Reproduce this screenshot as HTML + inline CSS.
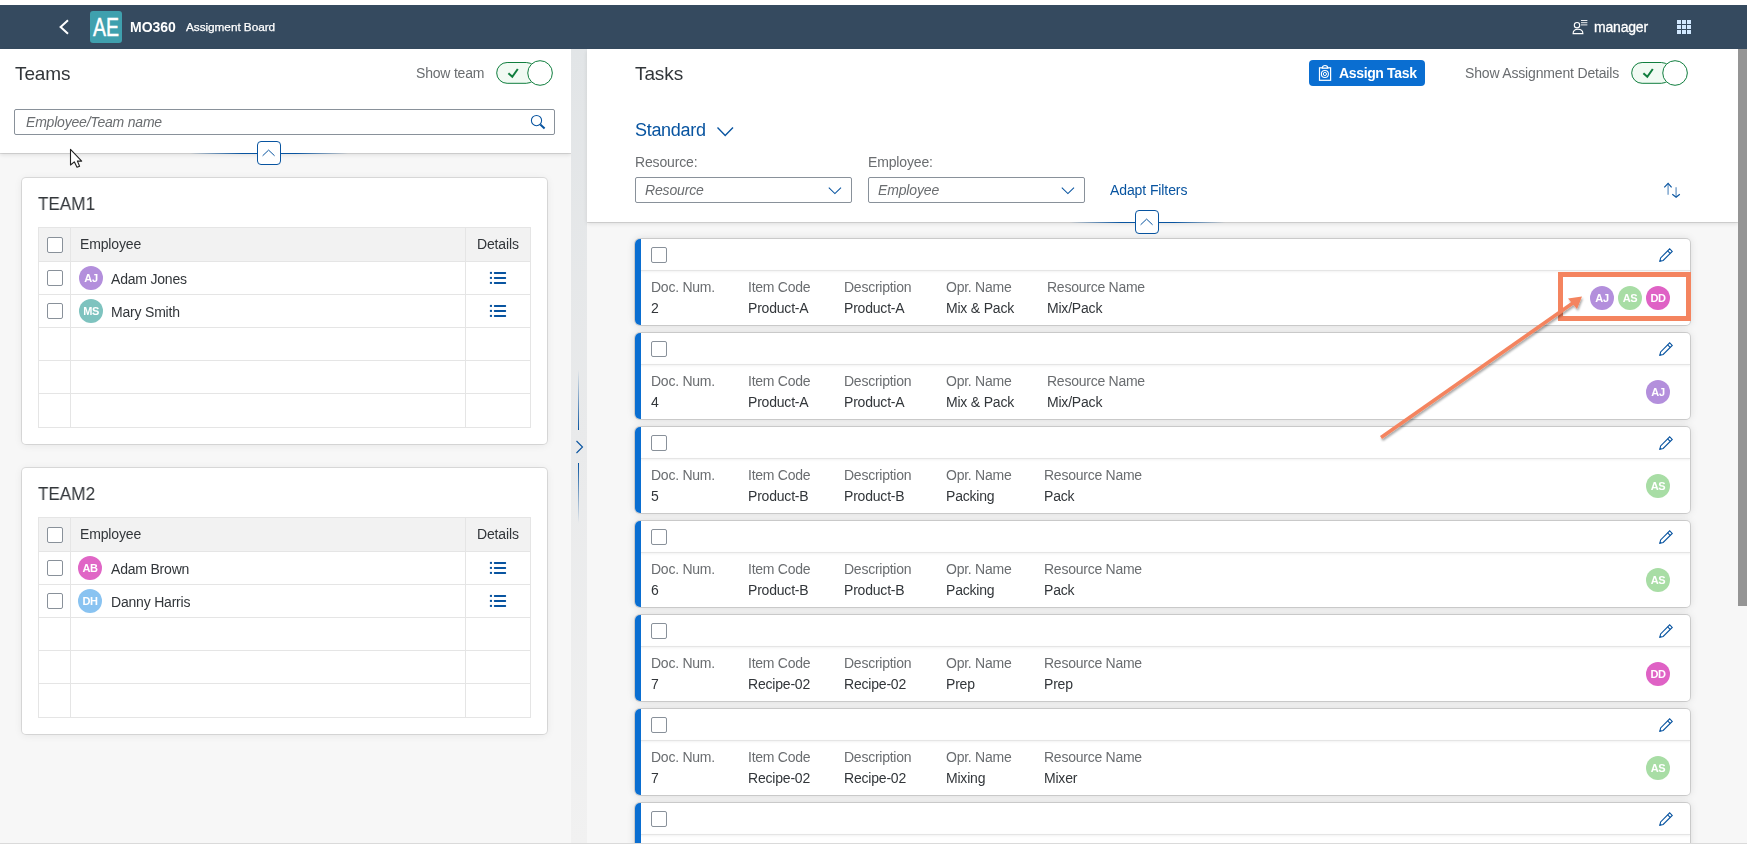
<!DOCTYPE html><html><head><meta charset="utf-8"><style>*{box-sizing:border-box;margin:0;padding:0}
html,body{width:1747px;height:847px;overflow:hidden;background:#fff;font-family:"Liberation Sans",sans-serif;color:#32363a}
.a{position:absolute}
svg{position:absolute;overflow:visible}
.t{position:absolute;white-space:nowrap;will-change:transform;font-size:14px;line-height:14px;letter-spacing:-0.15px}
#hdr{left:0;top:5px;width:1747px;height:44px;background:#354a5f}
#lp{left:0;top:49px;width:571px;height:794px;background:#f7f7f7}
#lph{left:0;top:49px;width:571px;height:104px;background:#fff;box-shadow:0 1px 0 rgba(0,0,0,0.1),0 2px 4px rgba(0,0,0,0.1)}
#split{left:571px;top:49px;width:16px;height:794px;background:linear-gradient(#e2e5e7,#e9eaeb 50%,#f1f1f1)}
#rp{left:587px;top:49px;width:1151px;height:794px;background:#f7f7f7}
#rph{left:587px;top:49px;width:1151px;height:173px;background:#fff;box-shadow:0 1px 0 rgba(0,0,0,0.1),0 2px 4px rgba(0,0,0,0.1)}
#sb{left:1738px;top:49px;width:9px;height:794px;background:#f7f7f7}
#sbt{left:1738px;top:49px;width:9px;height:557px;background:#959595}
#bot{left:0;top:843px;width:1747px;height:1px;background:#dadada}
.cb{position:absolute;width:16px;height:16px;border:1px solid #89919a;border-radius:2px;background:#fff}
.card{position:absolute;background:#fff;border-radius:4px;box-shadow:0 0 0 1px rgba(0,0,0,0.1),0 1px 8px rgba(0,0,0,0.08)}
.tbl{position:absolute;border:1px solid #e5e5e5;background:#fff}
.av{position:absolute;will-change:transform;width:24px;height:24px;border-radius:50%;color:#fff;font-weight:bold;font-size:11px;line-height:25px;text-align:center;letter-spacing:-0.4px}
.tc{position:absolute;left:635px;width:1055px;height:86px;background:#fff;border-radius:5px 4px 4px 5px;box-shadow:0 0 0 1px rgba(0,0,0,0.13),0 0 8px rgba(0,0,0,0.13);overflow:hidden}
.tc .bl{position:absolute;left:0;top:0;width:6px;height:100%;background:#0a6ed1}
.tc .sep{position:absolute;left:6px;right:0;top:31px;height:1px;background:#e5e5e5;box-shadow:0 1px 2px rgba(0,0,0,0.08)}
</style></head><body>
<div class="a" id="hdr"></div>
<div class="a" id="lp"></div>
<div class="a" id="lph"></div>
<div class="a" id="split"></div>
<div class="a" id="rp"></div>
<div class="a" id="rph"></div>
<div class="a" id="sb"></div><div class="a" id="sbt"></div>
<svg style="left:0;top:0" width="1747" height="50"><polyline points="68,20.3 60.6,27 68,33.7" fill="none" stroke="#fff" stroke-width="2"/><rect x="90" y="11" width="32" height="32" rx="3" fill="#3fa0ae"/><text x="106" y="36" font-family="Liberation Sans" font-size="25" fill="#fff" stroke="#fff" stroke-width="0.45" text-anchor="middle" textLength="26" lengthAdjust="spacingAndGlyphs">AE</text></svg>
<div class="t" style="left:129.6px;top:20.17px;font-size:14px;line-height:14px;color:#fff;letter-spacing:0px;font-weight:bold;">MO360</div>
<div class="t" style="left:185.5px;top:21.50px;font-size:11.8px;line-height:11.8px;color:#fff;letter-spacing:-0.05px;-webkit-text-stroke:0.25px #fff;">Assigment Board</div>
<svg style="left:1570px;top:18px" width="20" height="18" viewBox="0 0 20 18"><circle cx="7" cy="7.2" r="2.7" fill="none" stroke="#fff" stroke-width="1.1"/><path d="M3.1,15.6 C3.1,9.8 12.9,9.8 12.9,15.6 Z" fill="none" stroke="#fff" stroke-width="1.1"/><path d="M11,2.5 H17.4 M11,4.7 H17.4 M11,6.9 H17.4" stroke="#fff" stroke-width="0.9"/></svg>
<div class="t" style="left:1594.3px;top:20.37px;font-size:14px;line-height:14px;color:#fff;letter-spacing:-0.2px;-webkit-text-stroke:0.3px #fff;">manager</div>
<svg style="left:1676px;top:19px" width="16" height="16"><rect x="1" y="1" width="4" height="4" fill="#d1e8ff"/><rect x="1" y="6" width="4" height="4" fill="#d1e8ff"/><rect x="1" y="11" width="4" height="4" fill="#d1e8ff"/><rect x="6" y="1" width="4" height="4" fill="#d1e8ff"/><rect x="6" y="6" width="4" height="4" fill="#d1e8ff"/><rect x="6" y="11" width="4" height="4" fill="#d1e8ff"/><rect x="11" y="1" width="4" height="4" fill="#d1e8ff"/><rect x="11" y="6" width="4" height="4" fill="#d1e8ff"/><rect x="11" y="11" width="4" height="4" fill="#d1e8ff"/></svg>
<div class="t" style="left:15px;top:63.92px;font-size:19px;line-height:19px;color:#32363a;letter-spacing:-0.1px;">Teams</div>
<div class="t" style="left:416.4px;top:66.47px;font-size:14px;line-height:14px;color:#6a6d70;letter-spacing:-0.2px;">Show team</div>
<svg style="left:490px;top:55px" width="66" height="34"><rect x="6.7" y="7.5" width="40" height="20.8" rx="10.4" fill="#f1faf3" stroke="#107e3e" stroke-width="1"/><polyline points="18.4,18.2 22.3,21.8 27.8,14" fill="none" stroke="#107e3e" stroke-width="2"/><circle cx="50.05" cy="18" r="12.3" fill="#fff" stroke="#107e3e" stroke-width="1"/></svg>
<div class="a" style="left:14px;top:109px;width:541px;height:26px;border:1px solid #89919a;border-radius:2px;background:#fff"></div>
<div class="t" style="left:26.2px;top:115.27px;font-size:14px;line-height:14px;color:#6a6d70;letter-spacing:-0.2px;font-style:italic;">Employee/Team name</div>
<svg style="left:529px;top:113px" width="18" height="18" viewBox="0 0 18 18"><circle cx="7.5" cy="7.6" r="5.1" fill="none" stroke="#0854a0" stroke-width="1.05"/><line x1="11.3" y1="11.6" x2="15.6" y2="15.6" stroke="#0854a0" stroke-width="2"/></svg>
<svg style="left:190px;top:139px" width="158" height="28"><defs><linearGradient id="g269" x1="0" x2="1"><stop offset="0" stop-color="#0854a0" stop-opacity="0"/><stop offset="0.33" stop-color="#0854a0" stop-opacity="1"/><stop offset="0.67" stop-color="#0854a0" stop-opacity="1"/><stop offset="1" stop-color="#0854a0" stop-opacity="0"/></linearGradient></defs><rect x="0" y="14" width="158" height="1" fill="url(#g269)"/><rect x="67.5" y="2.5" width="23" height="23" rx="3.5" fill="#fff" stroke="#0854a0" stroke-width="1"/><polyline points="72.6,16.8 78.6,11.1 84.6,16.8" fill="none" stroke="#0854a0" stroke-width="1"/></svg>
<svg style="left:69px;top:148px" width="16" height="22" viewBox="0 0 16 22"><path d="M1.5,1.3 L1.5,17 L5.3,13.8 L8,19.3 L10.6,18.2 L8.4,13.1 L12.7,13.1 Z" fill="#fff" stroke="#222" stroke-width="1.1" stroke-linejoin="round"/></svg>
<div class="card" style="left:22px;top:178px;width:525px;height:266px"></div>
<div class="t" style="left:38.0px;top:195.00px;font-size:18.3px;line-height:18.3px;color:#32363a;letter-spacing:0.1px;transform:scaleX(0.93);transform-origin:0 0;">TEAM1</div>
<div class="a" style="left:38px;top:227px;width:493px;height:201px;background:#fff;border:1px solid #e5e5e5"></div>
<div class="a" style="left:39px;top:228px;width:491px;height:33px;background:#f2f2f2"></div>
<div class="a" style="left:39px;top:261px;width:491px;height:1px;background:#e5e5e5"></div>
<div class="a" style="left:39px;top:294px;width:491px;height:1px;background:#e5e5e5"></div>
<div class="a" style="left:39px;top:327px;width:491px;height:1px;background:#e5e5e5"></div>
<div class="a" style="left:39px;top:360px;width:491px;height:1px;background:#e5e5e5"></div>
<div class="a" style="left:39px;top:393px;width:491px;height:1px;background:#e5e5e5"></div>
<div class="a" style="left:70px;top:228px;width:1px;height:199px;background:#e5e5e5"></div>
<div class="a" style="left:465px;top:228px;width:1px;height:199px;background:#e5e5e5"></div>
<div class="cb" style="left:47px;top:237px"></div>
<div class="t" style="left:80.3px;top:237.37px;font-size:14px;line-height:14px;color:#32363a;letter-spacing:-0.15px;">Employee</div>
<div class="t" style="left:476.9px;top:237.37px;font-size:14px;line-height:14px;color:#32363a;letter-spacing:-0.15px;">Details</div>
<div class="cb" style="left:47px;top:270px"></div>
<div class="av" style="left:78.9px;top:266px;background:#b38fdc">AJ</div>
<div class="t" style="left:111px;top:272.37px;font-size:14px;line-height:14px;color:#32363a;letter-spacing:-0.2px;">Adam Jones</div>
<svg style="left:489px;top:271px" width="18" height="13" viewBox="0 0 18 13"><rect x="0.9" y="0.9" width="2.1" height="2" fill="#0854a0"/><rect x="4.9" y="0.9" width="12.2" height="2" rx="0.6" fill="#0854a0"/><rect x="0.9" y="5.9" width="2.1" height="2" fill="#0854a0"/><rect x="4.9" y="5.9" width="12.2" height="2" rx="0.6" fill="#0854a0"/><rect x="0.9" y="10.9" width="2.1" height="2" fill="#0854a0"/><rect x="4.9" y="10.9" width="12.2" height="2" rx="0.6" fill="#0854a0"/></svg>
<div class="cb" style="left:47px;top:303px"></div>
<div class="av" style="left:78.9px;top:299px;background:#7ec3bf">MS</div>
<div class="t" style="left:111px;top:305.37px;font-size:14px;line-height:14px;color:#32363a;letter-spacing:-0.2px;">Mary Smith</div>
<svg style="left:489px;top:304px" width="18" height="13" viewBox="0 0 18 13"><rect x="0.9" y="0.9" width="2.1" height="2" fill="#0854a0"/><rect x="4.9" y="0.9" width="12.2" height="2" rx="0.6" fill="#0854a0"/><rect x="0.9" y="5.9" width="2.1" height="2" fill="#0854a0"/><rect x="4.9" y="5.9" width="12.2" height="2" rx="0.6" fill="#0854a0"/><rect x="0.9" y="10.9" width="2.1" height="2" fill="#0854a0"/><rect x="4.9" y="10.9" width="12.2" height="2" rx="0.6" fill="#0854a0"/></svg>
<div class="card" style="left:22px;top:468px;width:525px;height:266px"></div>
<div class="t" style="left:38.0px;top:485.00px;font-size:18.3px;line-height:18.3px;color:#32363a;letter-spacing:0.1px;transform:scaleX(0.93);transform-origin:0 0;">TEAM2</div>
<div class="a" style="left:38px;top:517px;width:493px;height:201px;background:#fff;border:1px solid #e5e5e5"></div>
<div class="a" style="left:39px;top:518px;width:491px;height:33px;background:#f2f2f2"></div>
<div class="a" style="left:39px;top:551px;width:491px;height:1px;background:#e5e5e5"></div>
<div class="a" style="left:39px;top:584px;width:491px;height:1px;background:#e5e5e5"></div>
<div class="a" style="left:39px;top:617px;width:491px;height:1px;background:#e5e5e5"></div>
<div class="a" style="left:39px;top:650px;width:491px;height:1px;background:#e5e5e5"></div>
<div class="a" style="left:39px;top:683px;width:491px;height:1px;background:#e5e5e5"></div>
<div class="a" style="left:70px;top:518px;width:1px;height:199px;background:#e5e5e5"></div>
<div class="a" style="left:465px;top:518px;width:1px;height:199px;background:#e5e5e5"></div>
<div class="cb" style="left:47px;top:527px"></div>
<div class="t" style="left:80.3px;top:527.37px;font-size:14px;line-height:14px;color:#32363a;letter-spacing:-0.15px;">Employee</div>
<div class="t" style="left:476.9px;top:527.37px;font-size:14px;line-height:14px;color:#32363a;letter-spacing:-0.15px;">Details</div>
<div class="cb" style="left:47px;top:560px"></div>
<div class="av" style="left:78.3px;top:556px;background:#e066c6">AB</div>
<div class="t" style="left:111px;top:562.37px;font-size:14px;line-height:14px;color:#32363a;letter-spacing:-0.2px;">Adam Brown</div>
<svg style="left:489px;top:561px" width="18" height="13" viewBox="0 0 18 13"><rect x="0.9" y="0.9" width="2.1" height="2" fill="#0854a0"/><rect x="4.9" y="0.9" width="12.2" height="2" rx="0.6" fill="#0854a0"/><rect x="0.9" y="5.9" width="2.1" height="2" fill="#0854a0"/><rect x="4.9" y="5.9" width="12.2" height="2" rx="0.6" fill="#0854a0"/><rect x="0.9" y="10.9" width="2.1" height="2" fill="#0854a0"/><rect x="4.9" y="10.9" width="12.2" height="2" rx="0.6" fill="#0854a0"/></svg>
<div class="cb" style="left:47px;top:593px"></div>
<div class="av" style="left:78.3px;top:589px;background:#89c3f1">DH</div>
<div class="t" style="left:111px;top:595.37px;font-size:14px;line-height:14px;color:#32363a;letter-spacing:-0.2px;">Danny Harris</div>
<svg style="left:489px;top:594px" width="18" height="13" viewBox="0 0 18 13"><rect x="0.9" y="0.9" width="2.1" height="2" fill="#0854a0"/><rect x="4.9" y="0.9" width="12.2" height="2" rx="0.6" fill="#0854a0"/><rect x="0.9" y="5.9" width="2.1" height="2" fill="#0854a0"/><rect x="4.9" y="5.9" width="12.2" height="2" rx="0.6" fill="#0854a0"/><rect x="0.9" y="10.9" width="2.1" height="2" fill="#0854a0"/><rect x="4.9" y="10.9" width="12.2" height="2" rx="0.6" fill="#0854a0"/></svg>
<svg style="left:571px;top:360px" width="16" height="170"><defs><linearGradient id="vg1" x1="0" y1="0" x2="0" y2="1"><stop offset="0" stop-color="#0854a0" stop-opacity="0"/><stop offset="1" stop-color="#0854a0"/></linearGradient><linearGradient id="vg2" x1="0" y1="0" x2="0" y2="1"><stop offset="0" stop-color="#0854a0"/><stop offset="1" stop-color="#0854a0" stop-opacity="0"/></linearGradient></defs><rect x="7" y="10" width="1" height="60" fill="url(#vg1)"/><rect x="7" y="103" width="1" height="60" fill="url(#vg2)"/><polyline points="5.5,81 11.5,87 5.5,93" fill="none" stroke="#0854a0" stroke-width="1.1"/></svg>
<div class="t" style="left:635.4px;top:64.02px;font-size:19px;line-height:19px;color:#32363a;letter-spacing:-0.1px;">Tasks</div>
<div class="a" style="left:1309px;top:60px;width:116px;height:26px;background:#0a6ed1;border-radius:4px"></div>
<svg style="left:1312px;top:60px" width="28" height="26" viewBox="0 0 28 26"><rect x="7.5" y="7.8" width="11.1" height="12.5" fill="none" stroke="#fff" stroke-width="1.2"/><path d="M10.3,8.2 C10.3,4.6 15.7,4.6 15.7,8.2 Z" fill="#0a6ed1" stroke="#fff" stroke-width="1.2"/><circle cx="12.9" cy="14" r="3.5" fill="none" stroke="#fff" stroke-width="1.1"/><circle cx="12.9" cy="14" r="1.6" fill="none" stroke="#fff" stroke-width="1"/></svg>
<div class="t" style="left:1339.0px;top:65.97px;font-size:14px;line-height:14px;color:#fff;letter-spacing:-0.35px;font-weight:bold;">Assign Task</div>
<div class="t" style="left:1465.0px;top:66.47px;font-size:14px;line-height:14px;color:#6a6d70;letter-spacing:-0.17px;">Show Assignment Details</div>
<svg style="left:1625px;top:55px" width="66" height="34"><rect x="6.7" y="7.5" width="40" height="20.8" rx="10.4" fill="#f1faf3" stroke="#107e3e" stroke-width="1"/><polyline points="18.4,18.2 22.3,21.8 27.8,14" fill="none" stroke="#107e3e" stroke-width="2"/><circle cx="50.05" cy="18" r="12.3" fill="#fff" stroke="#107e3e" stroke-width="1"/></svg>
<div class="t" style="left:635.4px;top:120.75px;font-size:18px;line-height:18px;color:#0854a0;letter-spacing:-0.3px;">Standard</div>
<svg style="left:714px;top:122px" width="22" height="18"><polyline points="3.5,5.6 11.2,13.4 19,5.6" fill="none" stroke="#0854a0" stroke-width="1.4"/></svg>
<div class="t" style="left:635.4px;top:155.47px;font-size:14px;line-height:14px;color:#6a6d70;letter-spacing:-0.15px;">Resource:</div>
<div class="t" style="left:868.1px;top:155.47px;font-size:14px;line-height:14px;color:#6a6d70;letter-spacing:-0.15px;">Employee:</div>
<div class="a" style="left:635px;top:177px;width:217px;height:26px;border:1px solid #89919a;border-radius:2px;background:#fff"></div>
<div class="t" style="left:645px;top:182.97px;font-size:14px;line-height:14px;color:#6a6d70;letter-spacing:-0.15px;font-style:italic;">Resource</div>
<svg style="left:825px;top:183px" width="20" height="14"><polyline points="3.8,4.6 9.9,10.6 16,4.6" fill="none" stroke="#0854a0" stroke-width="1.05"/></svg>
<div class="a" style="left:868px;top:177px;width:217px;height:26px;border:1px solid #89919a;border-radius:2px;background:#fff"></div>
<div class="t" style="left:878px;top:182.97px;font-size:14px;line-height:14px;color:#6a6d70;letter-spacing:-0.15px;font-style:italic;">Employee</div>
<svg style="left:1058px;top:183px" width="20" height="14"><polyline points="3.8,4.6 9.9,10.6 16,4.6" fill="none" stroke="#0854a0" stroke-width="1.05"/></svg>
<div class="t" style="left:1110px;top:182.87px;font-size:14px;line-height:14px;color:#0854a0;letter-spacing:-0.1px;">Adapt Filters</div>
<svg style="left:1650px;top:175px" width="45" height="30"><line x1="18.1" y1="9" x2="18.1" y2="19.7" stroke="#0854a0" stroke-opacity="0.55" stroke-width="1.4"/><polyline points="14.3,12.4 18.1,8.3 21.6,12.4" fill="none" stroke="#0854a0" stroke-width="1.15"/><line x1="26.1" y1="12.2" x2="26.1" y2="22" stroke="#0854a0" stroke-opacity="0.55" stroke-width="1.4"/><polyline points="22.3,19.3 26.1,22.3 29.8,19.3" fill="none" stroke="#0854a0" stroke-width="1.15"/></svg>
<svg style="left:1070px;top:208px" width="155" height="28"><defs><linearGradient id="g1147" x1="0" x2="1"><stop offset="0" stop-color="#0854a0" stop-opacity="0"/><stop offset="0.33" stop-color="#0854a0" stop-opacity="1"/><stop offset="0.67" stop-color="#0854a0" stop-opacity="1"/><stop offset="1" stop-color="#0854a0" stop-opacity="0"/></linearGradient></defs><rect x="0" y="14" width="155" height="1" fill="url(#g1147)"/><rect x="65.5" y="2.5" width="23" height="23" rx="3.5" fill="#fff" stroke="#0854a0" stroke-width="1"/><polyline points="70.6,16.8 76.6,11.1 82.6,16.8" fill="none" stroke="#0854a0" stroke-width="1"/></svg>
<div class="tc" style="top:239px"><div class="bl"></div><div class="sep"></div></div>
<div class="cb" style="left:651px;top:247px"></div>
<svg style="left:1650px;top:240px" width="30" height="30"><g transform="translate(9.5,21.6) rotate(-45)"><path d="M0.5,0 L3.4,-1.8 L16.2,-1.8 L16.2,1.8 L3.4,1.8 Z" fill="none" stroke="#0854a0" stroke-width="1.1" stroke-linejoin="miter"/><line x1="13.3" y1="-1.8" x2="13.3" y2="1.8" stroke="#0854a0" stroke-width="1.1"/><path d="M0,0 L1.8,-1 L1.8,1 Z" fill="#0854a0"/></g></svg>
<div class="t" style="left:650.5px;top:280.47px;font-size:14px;line-height:14px;color:#6a6d70;letter-spacing:-0.25px;">Doc. Num.</div>
<div class="t" style="left:650.5px;top:301.47px;font-size:14px;line-height:14px;color:#32363a;letter-spacing:-0.2px;">2</div>
<div class="t" style="left:748.0px;top:280.47px;font-size:14px;line-height:14px;color:#6a6d70;letter-spacing:-0.25px;">Item Code</div>
<div class="t" style="left:748.0px;top:301.47px;font-size:14px;line-height:14px;color:#32363a;letter-spacing:-0.2px;">Product-A</div>
<div class="t" style="left:844.3px;top:280.47px;font-size:14px;line-height:14px;color:#6a6d70;letter-spacing:-0.25px;">Description</div>
<div class="t" style="left:844.3px;top:301.47px;font-size:14px;line-height:14px;color:#32363a;letter-spacing:-0.2px;">Product-A</div>
<div class="t" style="left:945.5px;top:280.47px;font-size:14px;line-height:14px;color:#6a6d70;letter-spacing:-0.25px;">Opr. Name</div>
<div class="t" style="left:945.5px;top:301.47px;font-size:14px;line-height:14px;color:#32363a;letter-spacing:-0.2px;">Mix &amp; Pack</div>
<div class="t" style="left:1046.7px;top:280.47px;font-size:14px;line-height:14px;color:#6a6d70;letter-spacing:-0.25px;">Resource Name</div>
<div class="t" style="left:1046.7px;top:301.47px;font-size:14px;line-height:14px;color:#32363a;letter-spacing:-0.2px;">Mix/Pack</div>
<div class="av" style="left:1590px;top:286px;background:#b38fdc">AJ</div>
<div class="av" style="left:1618px;top:286px;background:#a8dda5">AS</div>
<div class="av" style="left:1646px;top:286px;background:#df62c5">DD</div>
<div class="tc" style="top:333px"><div class="bl"></div><div class="sep"></div></div>
<div class="cb" style="left:651px;top:341px"></div>
<svg style="left:1650px;top:334px" width="30" height="30"><g transform="translate(9.5,21.6) rotate(-45)"><path d="M0.5,0 L3.4,-1.8 L16.2,-1.8 L16.2,1.8 L3.4,1.8 Z" fill="none" stroke="#0854a0" stroke-width="1.1" stroke-linejoin="miter"/><line x1="13.3" y1="-1.8" x2="13.3" y2="1.8" stroke="#0854a0" stroke-width="1.1"/><path d="M0,0 L1.8,-1 L1.8,1 Z" fill="#0854a0"/></g></svg>
<div class="t" style="left:650.5px;top:374.47px;font-size:14px;line-height:14px;color:#6a6d70;letter-spacing:-0.25px;">Doc. Num.</div>
<div class="t" style="left:650.5px;top:395.47px;font-size:14px;line-height:14px;color:#32363a;letter-spacing:-0.2px;">4</div>
<div class="t" style="left:748.0px;top:374.47px;font-size:14px;line-height:14px;color:#6a6d70;letter-spacing:-0.25px;">Item Code</div>
<div class="t" style="left:748.0px;top:395.47px;font-size:14px;line-height:14px;color:#32363a;letter-spacing:-0.2px;">Product-A</div>
<div class="t" style="left:844.3px;top:374.47px;font-size:14px;line-height:14px;color:#6a6d70;letter-spacing:-0.25px;">Description</div>
<div class="t" style="left:844.3px;top:395.47px;font-size:14px;line-height:14px;color:#32363a;letter-spacing:-0.2px;">Product-A</div>
<div class="t" style="left:945.5px;top:374.47px;font-size:14px;line-height:14px;color:#6a6d70;letter-spacing:-0.25px;">Opr. Name</div>
<div class="t" style="left:945.5px;top:395.47px;font-size:14px;line-height:14px;color:#32363a;letter-spacing:-0.2px;">Mix &amp; Pack</div>
<div class="t" style="left:1046.7px;top:374.47px;font-size:14px;line-height:14px;color:#6a6d70;letter-spacing:-0.25px;">Resource Name</div>
<div class="t" style="left:1046.7px;top:395.47px;font-size:14px;line-height:14px;color:#32363a;letter-spacing:-0.2px;">Mix/Pack</div>
<div class="av" style="left:1646px;top:380px;background:#b38fdc">AJ</div>
<div class="tc" style="top:427px"><div class="bl"></div><div class="sep"></div></div>
<div class="cb" style="left:651px;top:435px"></div>
<svg style="left:1650px;top:428px" width="30" height="30"><g transform="translate(9.5,21.6) rotate(-45)"><path d="M0.5,0 L3.4,-1.8 L16.2,-1.8 L16.2,1.8 L3.4,1.8 Z" fill="none" stroke="#0854a0" stroke-width="1.1" stroke-linejoin="miter"/><line x1="13.3" y1="-1.8" x2="13.3" y2="1.8" stroke="#0854a0" stroke-width="1.1"/><path d="M0,0 L1.8,-1 L1.8,1 Z" fill="#0854a0"/></g></svg>
<div class="t" style="left:650.5px;top:468.47px;font-size:14px;line-height:14px;color:#6a6d70;letter-spacing:-0.25px;">Doc. Num.</div>
<div class="t" style="left:650.5px;top:489.47px;font-size:14px;line-height:14px;color:#32363a;letter-spacing:-0.2px;">5</div>
<div class="t" style="left:748.0px;top:468.47px;font-size:14px;line-height:14px;color:#6a6d70;letter-spacing:-0.25px;">Item Code</div>
<div class="t" style="left:748.0px;top:489.47px;font-size:14px;line-height:14px;color:#32363a;letter-spacing:-0.2px;">Product-B</div>
<div class="t" style="left:844.3px;top:468.47px;font-size:14px;line-height:14px;color:#6a6d70;letter-spacing:-0.25px;">Description</div>
<div class="t" style="left:844.3px;top:489.47px;font-size:14px;line-height:14px;color:#32363a;letter-spacing:-0.2px;">Product-B</div>
<div class="t" style="left:945.5px;top:468.47px;font-size:14px;line-height:14px;color:#6a6d70;letter-spacing:-0.25px;">Opr. Name</div>
<div class="t" style="left:945.5px;top:489.47px;font-size:14px;line-height:14px;color:#32363a;letter-spacing:-0.2px;">Packing</div>
<div class="t" style="left:1043.8999999999999px;top:468.47px;font-size:14px;line-height:14px;color:#6a6d70;letter-spacing:-0.25px;">Resource Name</div>
<div class="t" style="left:1043.8999999999999px;top:489.47px;font-size:14px;line-height:14px;color:#32363a;letter-spacing:-0.2px;">Pack</div>
<div class="av" style="left:1646px;top:474px;background:#a8dda5">AS</div>
<div class="tc" style="top:521px"><div class="bl"></div><div class="sep"></div></div>
<div class="cb" style="left:651px;top:529px"></div>
<svg style="left:1650px;top:522px" width="30" height="30"><g transform="translate(9.5,21.6) rotate(-45)"><path d="M0.5,0 L3.4,-1.8 L16.2,-1.8 L16.2,1.8 L3.4,1.8 Z" fill="none" stroke="#0854a0" stroke-width="1.1" stroke-linejoin="miter"/><line x1="13.3" y1="-1.8" x2="13.3" y2="1.8" stroke="#0854a0" stroke-width="1.1"/><path d="M0,0 L1.8,-1 L1.8,1 Z" fill="#0854a0"/></g></svg>
<div class="t" style="left:650.5px;top:562.47px;font-size:14px;line-height:14px;color:#6a6d70;letter-spacing:-0.25px;">Doc. Num.</div>
<div class="t" style="left:650.5px;top:583.47px;font-size:14px;line-height:14px;color:#32363a;letter-spacing:-0.2px;">6</div>
<div class="t" style="left:748.0px;top:562.47px;font-size:14px;line-height:14px;color:#6a6d70;letter-spacing:-0.25px;">Item Code</div>
<div class="t" style="left:748.0px;top:583.47px;font-size:14px;line-height:14px;color:#32363a;letter-spacing:-0.2px;">Product-B</div>
<div class="t" style="left:844.3px;top:562.47px;font-size:14px;line-height:14px;color:#6a6d70;letter-spacing:-0.25px;">Description</div>
<div class="t" style="left:844.3px;top:583.47px;font-size:14px;line-height:14px;color:#32363a;letter-spacing:-0.2px;">Product-B</div>
<div class="t" style="left:945.5px;top:562.47px;font-size:14px;line-height:14px;color:#6a6d70;letter-spacing:-0.25px;">Opr. Name</div>
<div class="t" style="left:945.5px;top:583.47px;font-size:14px;line-height:14px;color:#32363a;letter-spacing:-0.2px;">Packing</div>
<div class="t" style="left:1043.8999999999999px;top:562.47px;font-size:14px;line-height:14px;color:#6a6d70;letter-spacing:-0.25px;">Resource Name</div>
<div class="t" style="left:1043.8999999999999px;top:583.47px;font-size:14px;line-height:14px;color:#32363a;letter-spacing:-0.2px;">Pack</div>
<div class="av" style="left:1646px;top:568px;background:#a8dda5">AS</div>
<div class="tc" style="top:615px"><div class="bl"></div><div class="sep"></div></div>
<div class="cb" style="left:651px;top:623px"></div>
<svg style="left:1650px;top:616px" width="30" height="30"><g transform="translate(9.5,21.6) rotate(-45)"><path d="M0.5,0 L3.4,-1.8 L16.2,-1.8 L16.2,1.8 L3.4,1.8 Z" fill="none" stroke="#0854a0" stroke-width="1.1" stroke-linejoin="miter"/><line x1="13.3" y1="-1.8" x2="13.3" y2="1.8" stroke="#0854a0" stroke-width="1.1"/><path d="M0,0 L1.8,-1 L1.8,1 Z" fill="#0854a0"/></g></svg>
<div class="t" style="left:650.5px;top:656.47px;font-size:14px;line-height:14px;color:#6a6d70;letter-spacing:-0.25px;">Doc. Num.</div>
<div class="t" style="left:650.5px;top:677.47px;font-size:14px;line-height:14px;color:#32363a;letter-spacing:-0.2px;">7</div>
<div class="t" style="left:748.0px;top:656.47px;font-size:14px;line-height:14px;color:#6a6d70;letter-spacing:-0.25px;">Item Code</div>
<div class="t" style="left:748.0px;top:677.47px;font-size:14px;line-height:14px;color:#32363a;letter-spacing:-0.2px;">Recipe-02</div>
<div class="t" style="left:844.3px;top:656.47px;font-size:14px;line-height:14px;color:#6a6d70;letter-spacing:-0.25px;">Description</div>
<div class="t" style="left:844.3px;top:677.47px;font-size:14px;line-height:14px;color:#32363a;letter-spacing:-0.2px;">Recipe-02</div>
<div class="t" style="left:945.5px;top:656.47px;font-size:14px;line-height:14px;color:#6a6d70;letter-spacing:-0.25px;">Opr. Name</div>
<div class="t" style="left:945.5px;top:677.47px;font-size:14px;line-height:14px;color:#32363a;letter-spacing:-0.2px;">Prep</div>
<div class="t" style="left:1043.8999999999999px;top:656.47px;font-size:14px;line-height:14px;color:#6a6d70;letter-spacing:-0.25px;">Resource Name</div>
<div class="t" style="left:1043.8999999999999px;top:677.47px;font-size:14px;line-height:14px;color:#32363a;letter-spacing:-0.2px;">Prep</div>
<div class="av" style="left:1646px;top:662px;background:#df62c5">DD</div>
<div class="tc" style="top:709px"><div class="bl"></div><div class="sep"></div></div>
<div class="cb" style="left:651px;top:717px"></div>
<svg style="left:1650px;top:710px" width="30" height="30"><g transform="translate(9.5,21.6) rotate(-45)"><path d="M0.5,0 L3.4,-1.8 L16.2,-1.8 L16.2,1.8 L3.4,1.8 Z" fill="none" stroke="#0854a0" stroke-width="1.1" stroke-linejoin="miter"/><line x1="13.3" y1="-1.8" x2="13.3" y2="1.8" stroke="#0854a0" stroke-width="1.1"/><path d="M0,0 L1.8,-1 L1.8,1 Z" fill="#0854a0"/></g></svg>
<div class="t" style="left:650.5px;top:750.47px;font-size:14px;line-height:14px;color:#6a6d70;letter-spacing:-0.25px;">Doc. Num.</div>
<div class="t" style="left:650.5px;top:771.47px;font-size:14px;line-height:14px;color:#32363a;letter-spacing:-0.2px;">7</div>
<div class="t" style="left:748.0px;top:750.47px;font-size:14px;line-height:14px;color:#6a6d70;letter-spacing:-0.25px;">Item Code</div>
<div class="t" style="left:748.0px;top:771.47px;font-size:14px;line-height:14px;color:#32363a;letter-spacing:-0.2px;">Recipe-02</div>
<div class="t" style="left:844.3px;top:750.47px;font-size:14px;line-height:14px;color:#6a6d70;letter-spacing:-0.25px;">Description</div>
<div class="t" style="left:844.3px;top:771.47px;font-size:14px;line-height:14px;color:#32363a;letter-spacing:-0.2px;">Recipe-02</div>
<div class="t" style="left:945.5px;top:750.47px;font-size:14px;line-height:14px;color:#6a6d70;letter-spacing:-0.25px;">Opr. Name</div>
<div class="t" style="left:945.5px;top:771.47px;font-size:14px;line-height:14px;color:#32363a;letter-spacing:-0.2px;">Mixing</div>
<div class="t" style="left:1043.8999999999999px;top:750.47px;font-size:14px;line-height:14px;color:#6a6d70;letter-spacing:-0.25px;">Resource Name</div>
<div class="t" style="left:1043.8999999999999px;top:771.47px;font-size:14px;line-height:14px;color:#32363a;letter-spacing:-0.2px;">Mixer</div>
<div class="av" style="left:1646px;top:756px;background:#a8dda5">AS</div>
<div class="tc" style="top:803px"><div class="bl"></div><div class="sep"></div></div>
<div class="cb" style="left:651px;top:811px"></div>
<svg style="left:1650px;top:804px" width="30" height="30"><g transform="translate(9.5,21.6) rotate(-45)"><path d="M0.5,0 L3.4,-1.8 L16.2,-1.8 L16.2,1.8 L3.4,1.8 Z" fill="none" stroke="#0854a0" stroke-width="1.1" stroke-linejoin="miter"/><line x1="13.3" y1="-1.8" x2="13.3" y2="1.8" stroke="#0854a0" stroke-width="1.1"/><path d="M0,0 L1.8,-1 L1.8,1 Z" fill="#0854a0"/></g></svg>
<div class="a" style="left:1558px;top:272px;width:133px;height:49px;border:5px solid #f4845f"></div>
<svg style="left:1370px;top:285px" width="230" height="165"><defs><filter id="sh" x="-20%" y="-20%" width="140%" height="140%"><feDropShadow dx="1" dy="2" stdDeviation="1.2" flood-color="#000" flood-opacity="0.35"/></filter></defs><g filter="url(#sh)"><line x1="11" y1="152.5" x2="205" y2="16.5" stroke="#f4845f" stroke-width="3.5" stroke-linecap="butt"/><path d="M212,11.5 L198,13.5 L207,24 Z" fill="#f4845f"/></g></svg>
<div class="a" id="bot"></div><div class="a" style="left:0;top:844px;width:1747px;height:3px;background:#fff"></div>
</body></html>
